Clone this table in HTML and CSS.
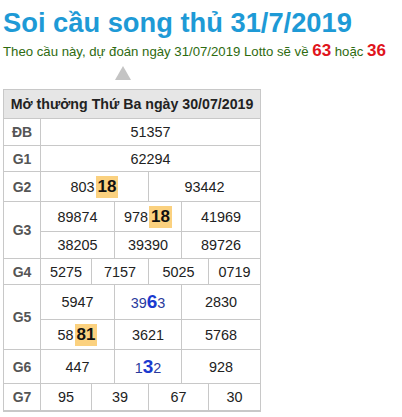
FILE: index.html
```html
<!DOCTYPE html>
<html lang="vi">
<head>
<meta charset="utf-8">
<link rel="stylesheet" href="styles.css">
</head>
<body>
<div class="page">
  <h1 class="title">Soi cầu song thủ 31/7/2019</h1>
  <p class="lead">Theo cầu này, dự đoán ngày 31/07/2019 Lotto sẽ về <b class="hot">63</b> hoặc <b class="hot">36</b></p>
  <div class="arrow-row"><span class="arrow"></span></div>
  <table class="kq">
    <colgroup>
      <col class="c0"><col class="c1"><col class="c2"><col class="c3"><col class="c4"><col class="c5"><col class="c6">
    </colgroup>
    <thead>
      <tr><th colspan="7">Mở thưởng Thứ Ba ngày 30/07/2019</th></tr>
    </thead>
    <tbody>
      <tr class="r27"><td class="lbl">ĐB</td><td colspan="6">51357</td></tr>
      <tr class="r26"><td class="lbl">G1</td><td colspan="6">62294</td></tr>
      <tr class="r30"><td class="lbl">G2</td><td colspan="3">803<span class="hl">18</span></td><td colspan="3">93442</td></tr>
      <tr class="r30"><td class="lbl" rowspan="2">G3</td><td colspan="2">89874</td><td colspan="2">978<span class="hl">18</span></td><td colspan="2">41969</td></tr>
      <tr class="r27"><td colspan="2">38205</td><td colspan="2">39390</td><td colspan="2">89726</td></tr>
      <tr class="r26"><td class="lbl">G4</td><td>5275</td><td colspan="2">7157</td><td colspan="2">5025</td><td>0719</td></tr>
      <tr class="r35"><td class="lbl" rowspan="2">G5</td><td colspan="2">5947</td><td colspan="2" class="blue">39<b class="big">6</b>3</td><td colspan="2">2830</td></tr>
      <tr class="r30"><td colspan="2">58<span class="hl">81</span></td><td colspan="2">3621</td><td colspan="2">5768</td></tr>
      <tr class="r34"><td class="lbl">G6</td><td colspan="2">447</td><td colspan="2" class="blue">1<b class="big">3</b>2</td><td colspan="2">928</td></tr>
      <tr class="r27"><td class="lbl">G7</td><td>95</td><td colspan="2">39</td><td colspan="2">67</td><td>30</td></tr>
    </tbody>
  </table>
</div>
</body>
</html>
```

FILE: styles.css
```css
html, body {
  margin: 0;
  padding: 0;
  background: #ffffff;
}
.page {
  padding: 0 3px;
  font-family: "Liberation Sans", Arial, sans-serif;
  color: #222;
}
.title {
  margin: 0;
  padding-top: 7px;
  font-size: 27.3px;
  line-height: 32px;
  font-weight: bold;
  color: #1e9ad6;
}
.lead {
  margin: 2px 0 0;
  font-size: 13.2px;
  line-height: 20px;
  color: #2e6b10;
}
.hot {
  color: #e0141c;
  font-size: 17px;
}
.arrow-row {
  height: 27px;
  padding-left: 112px;
  padding-top: 4px;
  box-sizing: border-box;
}
.arrow {
  display: block;
  width: 0;
  height: 0;
  border-left: 8px solid transparent;
  border-right: 8px solid transparent;
  border-bottom: 14px solid #c4c4c4;
}
.kq {
  border-collapse: collapse;
  width: 257px;
  table-layout: fixed;
  border-bottom: 2px solid #c8c8c8;
}
.c0 { width: 37px; }
.c1 { width: 51px; }
.c2 { width: 23px; }
.c3 { width: 34px; }
.c4 { width: 33px; }
.c5 { width: 27px; }
.c6 { width: 52px; }
.kq th, .kq td {
  border: 1px solid #c8c8c8;
  padding: 0;
  text-align: center;
  vertical-align: middle;
}
.kq th {
  height: 28px;
  background: #e6e6e6;
  font-size: 14.2px;
  font-weight: bold;
  color: #222;
  white-space: nowrap;
}
.kq td {
  font-size: 14.4px;
  color: #222;
}
.kq td.lbl {
  font-size: 14px;
  font-weight: bold;
  color: #555;
}
.kq td.blue {
  color: #2a3a9c;
}
.r26 td { height: 25px; }
.r27 td { height: 26px; }
.r30 td { height: 29px; }
.r34 td { height: 33px; }
.r35 td { height: 34px; }
.hl {
  display: inline-block;
  background: #fbd17f;
  font-weight: bold;
  font-size: 17px;
  line-height: 22px;
  padding: 0 2px;
  margin-left: 1px;
  color: #111;
}
.big {
  color: #1a3ad0;
  font-size: 19px;
  line-height: 22px;
}
```
